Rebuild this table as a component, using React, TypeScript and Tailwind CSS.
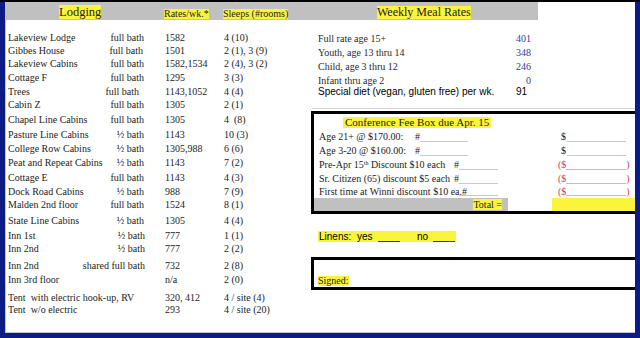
import React from "react";

type Room = {
  name: string;
  bath?: string;
  rate: string;
  sleeps: string;
  h: string; // row height, taken from the sheet
  pad?: string; // nudges the bath column where the sheet is uneven
};

const rooms: Room[] = [
  { name: "Lakeview Lodge", bath: "full bath", rate: "1582", sleeps: "4 (10)", h: "h-[13px]" },
  { name: "Gibbes House", bath: "full bath", rate: "1501", sleeps: "2 (1), 3 (9)", h: "h-[13.5px]", pad: "pr-[2px]" },
  { name: "Lakeview Cabins", bath: "full bath", rate: "1582,1534", sleeps: "2 (4), 3 (2)", h: "h-[13.5px]" },
  { name: "Cottage F", bath: "full bath", rate: "1295", sleeps: "3 (3)", h: "h-[14px]" },
  { name: "Trees", bath: "full bath", rate: "1143,1052", sleeps: "4 (4)", h: "h-[13px]", pad: "pr-[6px]" },
  { name: "Cabin Z", bath: "full bath", rate: "1305", sleeps: "2 (1)", h: "h-[15px]" },
  { name: "Chapel Line Cabins", bath: "full bath", rate: "1305", sleeps: "4  (8)", h: "h-[15px]" },
  { name: "Pasture Line Cabins", bath: "½ bath", rate: "1143", sleeps: "10 (3)", h: "h-[14px]" },
  { name: "College Row Cabins", bath: "½ bath", rate: "1305,988", sleeps: "6 (6)", h: "h-[14px]" },
  { name: "Peat and Repeat Cabins", bath: "½ bath", rate: "1143", sleeps: "7 (2)", h: "h-[15px]" },
  { name: "Cottage E", bath: "full bath", rate: "1143", sleeps: "4 (3)", h: "h-[14px]" },
  { name: "Dock Road Cabins", bath: "½ bath", rate: "988", sleeps: "7 (9)", h: "h-[13px]" },
  { name: "Malden 2nd floor", bath: "full bath", rate: "1524", sleeps: "8 (1)", h: "h-[16px]" },
  { name: "State Line Cabins", bath: "½ bath", rate: "1305", sleeps: "4 (4)", h: "h-[15px]" },
  { name: "Inn 1st", bath: "½ bath", rate: "777", sleeps: "1 (1)", h: "h-[13px]", pad: "pr-0" },
  { name: "Inn 2nd", bath: "½ bath", rate: "777", sleeps: "2 (2)", h: "h-[17px]", pad: "pr-0" },
  { name: "Inn 2nd", bath: "shared full bath", rate: "732", sleeps: "2 (8)", h: "h-[14px]", pad: "pr-0" },
  { name: "Inn 3rd floor", rate: "n/a", sleeps: "2 (0)", h: "h-[18px]" },
  { name: "Tent  with electric hook-up, RV", rate: "320, 412", sleeps: "4 / site (4)", h: "h-[12px]" },
  { name: "Tent  w/o electric", rate: "293", sleeps: "4 / site (20)", h: "h-[13px]" },
];

const meals = [
  { label: "Full rate age 15+", price: "401", h: "h-[14px]" },
  { label: "Youth, age 13 thru 14", price: "348", h: "h-[14px]" },
  { label: "Child, age 3 thru 12", price: "246", h: "h-[14px]" },
  { label: "Infant thru age 2", price: "0", h: "h-[11px]" },
];

function GrayLine({ w }: { w: string }) {
  return <div className={`${w} self-end mb-[2px] h-px bg-[#c9c9c9]`} />;
}

function Money({ red }: { red?: boolean }) {
  if (!red) {
    return (
      <div className="flex h-full pl-[9px]">
        <span className="self-center">$</span>
        <div className="w-[59px] ml-[1px] self-end mb-[2px] h-px bg-[#c9c9c9]" />
      </div>
    );
  }
  return (
    <div className="flex h-full pl-[6px] text-[#e23a3a]">
      <span className="self-center">($</span>
      <div className="w-[60px] self-end mb-[2px] h-px bg-[#f3a6a6]" />
      <span className="self-center">)</span>
    </div>
  );
}

export default function App() {
  return (
    <div className="w-[640px] h-[338px] bg-[#0c1c84] border-t-2 border-black pl-[5px] pr-[5px] pb-[5px] flex font-['Liberation_Serif',serif] text-[#1c1c1c] overflow-hidden">
      <div className="flex-1 flex flex-col bg-white border-l border-b border-[#bcc0d8] overflow-hidden">
        {/* header band */}
        <div className="flex h-[18px] shrink-0">
          <div className="w-[532px] bg-[#c0c0c0] flex items-end pb-[1px] whitespace-nowrap">
            <div className="w-[158px] pl-[53px] flex">
              <span className="bg-[#fbf43c] text-[12.5px] leading-[14px]">Lodging</span>
            </div>
            <div className="w-[59px] flex">
              <span className="bg-[#fbf43c] text-[10px] leading-[10px]">Rates/wk.*</span>
            </div>
            <div className="w-[154px] flex">
              <span className="bg-[#fbf43c] text-[10px] leading-[10px]">Sleeps (#rooms)</span>
            </div>
            <span className="bg-[#fbf43c] text-[12px] leading-[13px]">Weekly Meal Rates</span>
          </div>
        </div>

        <div className="flex flex-1">
          {/* lodging list */}
          <div className="w-[305px] shrink-0 pt-[10.5px] text-[10px] leading-[13px] whitespace-pre">
            {rooms.map((r, i) => (
              <div key={i} className={`${r.h} flex`}>
                <div className={`w-[139px] shrink-0 pl-[2px] flex justify-between ${r.pad ?? "pr-[1px]"}`}>
                  <span>{r.name}</span>
                  {r.bath && <span>{r.bath}</span>}
                </div>
                <div className="w-[20px] shrink-0" />
                <div className="w-[59px] shrink-0">{r.rate}</div>
                <div>{r.sleeps}</div>
              </div>
            ))}
          </div>

          {/* right side */}
          <div className="flex-1 flex flex-col pt-[11.5px]">
            <div className="text-[10px] leading-[13px] text-[#2a2a2a]">
              {meals.map((m) => (
                <div key={m.label} className={`${m.h} w-[220px] pl-[7px] flex justify-between`}>
                  <span>{m.label}</span>
                  <span className="text-[#2d3d9d]">{m.price}</span>
                </div>
              ))}
              <div className="h-[13px] w-[220px] pl-[7px] flex justify-between font-['Liberation_Sans',Arial,sans-serif] text-black">
                <span>Special diet (vegan, gluten free) per wk.</span>
                <span className="pr-[4px]">91</span>
              </div>
            </div>

            <div className="mt-[10.5px] ml-px h-px shrink-0 bg-[#d6d6d6]" />

            {/* conference fee box */}
            <div className="mt-[2px] shrink-0 border-l-[3px] border-y-[3px] border-black text-[10px] leading-[12px] whitespace-pre">
              <div className="h-[16px] pt-[3px] pl-[29px] flex items-start">
                <span className="bg-[#fbf43c] px-[2px] text-[11px] leading-[11px]">
                  Conference Fee Box due Apr. 15
                </span>
              </div>

              <div className="h-[14px] flex">
                <div className="w-[238px] flex">
                  <div className="w-[106px] pl-[5px] flex justify-between items-center">
                    <span>Age 21+ @ $170.00:</span>
                    <span>#</span>
                  </div>
                  <GrayLine w="w-[48px]" />
                </div>
                <Money />
              </div>
              <div className="h-[14px] flex">
                <div className="w-[238px] flex">
                  <div className="w-[106px] pl-[5px] flex justify-between items-center">
                    <span>Age 3-20 @ $160.00:</span>
                    <span>#</span>
                  </div>
                  <GrayLine w="w-[48px]" />
                </div>
                <Money />
              </div>
              <div className="h-[14px] flex">
                <div className="w-[238px] flex">
                  <div className="w-[145px] pl-[5px] flex justify-between items-center">
                    <span>
                      Pre-Apr 15<span className="relative -top-[3px] text-[6px]">th</span> Discount $10 each
                    </span>
                    <span>#</span>
                  </div>
                  <GrayLine w="w-[39px]" />
                </div>
                <Money red />
              </div>
              <div className="h-[14px] flex">
                <div className="w-[238px] flex">
                  <div className="w-[145px] pl-[5px] flex justify-between items-center">
                    <span>Sr. Citizen (65) discount $5 each</span>
                    <span>#</span>
                  </div>
                  <GrayLine w="w-[39px]" />
                </div>
                <Money red />
              </div>
              <div className="h-[12px] flex">
                <div className="w-[238px] flex">
                  <div className="w-[145px] pl-[5px] flex items-center">
                    <span>First time at Winni discount $10 ea.#</span>
                  </div>
                  <GrayLine w="w-[39px]" />
                </div>
                <Money red />
              </div>

              <div className="h-[13px] flex">
                <div className="w-[194px] bg-[#c0c0c0] flex justify-end items-center pr-[6px]">
                  <span className="bg-[#fbf43c] leading-[11px]">Total =</span>
                </div>
                <div className="w-[44px]" />
                <div className="flex-1 bg-[#fbf43c]" />
              </div>
            </div>

            {/* linens */}
            <div className="mt-[17px] ml-[7px] h-[11px] shrink-0 flex">
              <div className="bg-[#fbf43c] flex items-center pl-[1px] pr-[1px] text-[10px] leading-[11px] font-['Liberation_Sans',Arial,sans-serif] text-black whitespace-pre">
                <span className="w-[38px]">Linens:</span>
                <span className="w-[21px]">yes</span>
                <span className="w-[22px] overflow-hidden">____</span>
                <span className="w-[17px]" />
                <span className="w-[16px]">no</span>
                <span className="w-[22px] overflow-hidden">____</span>
              </div>
            </div>

            {/* signature box */}
            <div className="mt-[15px] h-[33px] shrink-0 border-l-[3px] border-y-[3px] border-black pt-[16px] pl-[4px] flex items-start">
              <span className="bg-[#fbf43c] text-[10px] leading-[10px]">Signed:</span>
            </div>
          </div>
        </div>
      </div>
    </div>
  );
}
